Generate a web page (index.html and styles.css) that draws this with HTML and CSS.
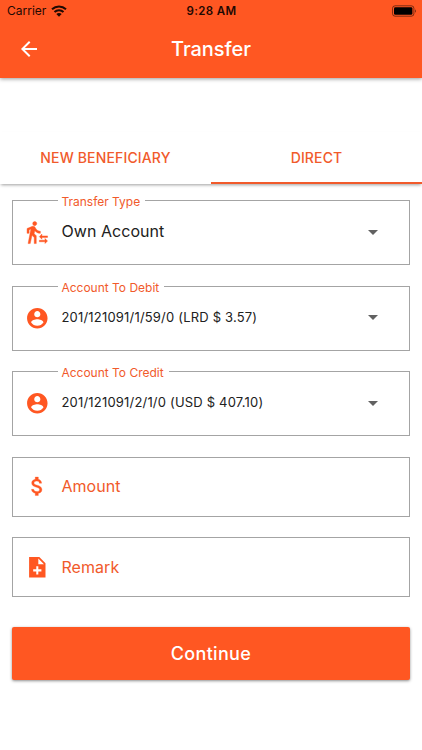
FILE: index.html
```html
<!DOCTYPE html>
<html lang="en">
<head>
<meta charset="utf-8">
<meta name="viewport" content="width=device-width, initial-scale=1">
<title>Transfer</title>
<link rel="stylesheet" href="styles.css">
</head>
<body>
<header class="appbar">
  <div class="status">
    <div class="carrier"><span class="carrier-name">Carrier</span>
      <svg class="wifi" viewBox="0 0 16 12"><path d="M1 4.3C5 .6 11 .6 15 4.3" fill="none" stroke="currentColor" stroke-width="2"/><path d="M3.5 7C6 4.6 10 4.6 12.500 7" fill="none" stroke="currentColor" stroke-width="2"/><path d="M5.300 9.100Q8 6.800 10.700 9.100L8 11.800z" fill="currentColor"/></svg>
    </div>
    <span class="time">9:28 AM</span>
    <svg class="battery" viewBox="0 0 25 12"><rect x=".5" y=".8" width="21.400" height="10.400" rx="2.600" fill="none" stroke="#000" stroke-opacity=".5"/><rect x="2" y="2.300" width="18.400" height="7.400" rx="1.300"/><path d="M23 4.200q2 1.800 0 3.600z" opacity=".5"/></svg>
  </div>
  <div class="toolbar">
    <svg class="back" viewBox="0 0 24 24"><path d="M20 11H7.830l5.590-5.590L12 4l-8 8 8 8 1.410-1.410L7.830 13H20v-2z"/></svg>
    <h1 class="title">Transfer</h1>
  </div>
</header>
<nav class="tabs">
  <div class="tab">NEW BENEFICIARY</div>
  <div class="tab active">DIRECT</div>
</nav>
<main class="form">
  <div class="field select">
    <span class="label">Transfer Type</span>
    <svg class="icon" viewBox="0 0 24 24"><path d="M16.490 15.500v-1.750L14 16.250l2.490 2.500V17H22v-1.500zm3.020 4.250H14v1.500h5.510V23L22 20.500 19.510 18zM9.500 5.500c1.100 0 2-.9 2-2s-.9-2-2-2-2 .9-2 2 .9 2 2 2zM5.750 8.900L3 23h2.100l1.750-8L9 17v6h2v-7.550L8.950 13.400l.6-3C10.850 12 12.800 13 15 13v-2c-1.850 0-3.450-1-4.350-2.450l-.95-1.600C9.350 6.350 8.700 6 8 6c-.25 0-.5.050-.75.150L2 8.300V13h2V9.650l1.750-.75" stroke="#ff5722" stroke-width=".4"/></svg>
    <span class="value large">Own Account</span>
    <svg class="caret" viewBox="0 0 24 24"><path d="M7 10l5 5 5-5z"/></svg>
  </div>
  <div class="field select">
    <span class="label">Account To Debit</span>
    <svg class="icon" viewBox="0 0 24 24"><path d="M12 2C6.480 2 2 6.480 2 12s4.480 10 10 10 10-4.480 10-10S17.520 2 12 2zm0 3c1.660 0 3 1.340 3 3s-1.340 3-3 3-3-1.340-3-3 1.340-3 3-3zm0 14.200c-2.500 0-4.710-1.280-6-3.220.030-1.990 4-3.080 6-3.080 1.990 0 5.970 1.090 6 3.080-1.290 1.940-3.500 3.220-6 3.220z"/></svg>
    <span class="value">201/121091/1/59/0 (LRD $ 3.57)</span>
    <svg class="caret" viewBox="0 0 24 24"><path d="M7 10l5 5 5-5z"/></svg>
  </div>
  <div class="field select">
    <span class="label">Account To Credit</span>
    <svg class="icon" viewBox="0 0 24 24"><path d="M12 2C6.480 2 2 6.480 2 12s4.480 10 10 10 10-4.480 10-10S17.520 2 12 2zm0 3c1.660 0 3 1.340 3 3s-1.340 3-3 3-3-1.340-3-3 1.340-3 3-3zm0 14.200c-2.500 0-4.710-1.280-6-3.220.030-1.990 4-3.080 6-3.080 1.990 0 5.970 1.090 6 3.080-1.290 1.940-3.500 3.220-6 3.220z"/></svg>
    <span class="value">201/121091/2/1/0 (USD $ 407.10)</span>
    <svg class="caret" viewBox="0 0 24 24"><path d="M7 10l5 5 5-5z"/></svg>
  </div>
  <div class="field">
    <svg class="icon" viewBox="0 0 24 24"><path d="M11.800 10.900c-2.270-.59-3-1.200-3-2.150 0-1.090 1.010-1.850 2.700-1.850 1.780 0 2.440.85 2.500 2.100h2.210c-.07-1.720-1.120-3.300-3.210-3.810V3h-3v2.160c-1.940.42-3.500 1.680-3.500 3.610 0 2.310 1.910 3.460 4.700 4.130 2.500.6 3 1.480 3 2.410 0 .69-.49 1.790-2.700 1.790-2.060 0-2.870-.92-2.980-2.100h-2.200c.12 2.190 1.760 3.420 3.680 3.830V21h3v-2.150c1.950-.37 3.500-1.500 3.500-3.550 0-2.840-2.430-3.810-4.700-4.400z" stroke="#ff5722" stroke-width=".3"/></svg>
    <span class="value hint">Amount</span>
  </div>
  <div class="field">
    <svg class="icon" viewBox="0 0 24 24"><path d="M14 2H4v20h16V8l-6-6zm2 14h-3v3h-2v-3H8v-2h3v-3h2v3h3v2zm-3-7V3.500L18.500 9H13z"/></svg>
    <span class="value hint">Remark</span>
  </div>
  <button class="continue" type="button">Continue</button>
</main>
</body>
</html>
```
FILE: styles.css
```css
* { box-sizing: border-box; }
body {
  margin: 0;
  width: 422px;
  height: 750px;
  overflow: hidden;
  background: #fff;
  color: #212121;
  font-family: Inter, "Liberation Sans", sans-serif;
}
svg { display: block; flex: none; }
.appbar {
  height: 77.500px;
  background: #ff5722;
  box-shadow: 0 1px 4px rgba(0, 0, 0, .4);
}
.status {
  height: 21px;
  display: grid;
  grid-template-columns: 1fr auto 1fr;
  align-items: center;
  padding: 1px 6px 0 7px;
  color: #1f0902;
  line-height: 20px;
}
.carrier { display: flex; align-items: center; gap: 5px; }
.carrier-name { font-size: 12px; letter-spacing: 0; }
.wifi { width: 16px; height: 12px; margin-top: -1px; }
.time { font-size: 11.500px; font-weight: 600; letter-spacing: .4px; }
.battery { width: 25px; height: 12px; margin: -1px -1px 0 0; justify-self: end; }
.toolbar {
  height: 56px;
  display: grid;
  grid-template-columns: 58px 1fr 58px;
  align-items: center;
  color: #fff;
}
.back { width: 24px; height: 24px; margin-left: 17px; fill: #fff; }
.title { margin: 0; text-align: center; font-size: 20px; line-height: 28px; font-weight: 500; letter-spacing: -.05px; }
.tabs {
  display: flex;
  height: 51.500px;
  margin-top: 54.500px;
  background: #fff;
  box-shadow: 0 2px 3px -1px rgba(0, 0, 0, .38);
}
.tab {
  flex: 1;
  display: flex;
  align-items: center;
  justify-content: center;
  padding-top: 2px;
  border-bottom: 2px solid transparent;
  color: #f15a2b;
  font-size: 14px;
  font-weight: 450;
  letter-spacing: .15px;
}
.tab.active { border-bottom-color: #f15a2b; }
.form { padding: 16.500px 12.500px 0 12.400px; }
.field {
  position: relative;
  display: flex;
  align-items: center;
  height: 60px;
  padding: 0 24px 0 11.300px;
  margin-bottom: 20.500px;
  border: 1px solid #a4a4a4;
}
.field.select { height: 65px; }
.label {
  position: absolute;
  left: 45px;
  top: -7px;
  padding: 0 5px 0 3px;
  background: #fff;
  color: #f15a2b;
  font-size: 12px;
  line-height: 16px;
  white-space: nowrap;
}
.icon { width: 24.600px; height: 24.600px; fill: #ff5722; }
.value {
  flex: 1;
  margin-left: 12.200px;
  font-size: 13px;
  line-height: 20px;
  letter-spacing: .19px;
  white-space: nowrap;
}
.select .value { padding-bottom: 3px; }
.value.large, .value.hint { font-size: 16px; letter-spacing: .05px; }
.value.hint { color: #f15a2b; padding-bottom: 1px; }
.caret { width: 24px; height: 24px; margin-top: -2px; fill: #616161; }
.continue {
  display: block;
  width: 100%;
  height: 53px;
  margin-top: 30px;
  border: 0;
  border-radius: 2px;
  background: #ff5722;
  box-shadow: 0 1px 3px rgba(0, 0, 0, .45);
  color: #fff;
  font: 500 18px/24px Inter, sans-serif;
  letter-spacing: .3px;
}
```
